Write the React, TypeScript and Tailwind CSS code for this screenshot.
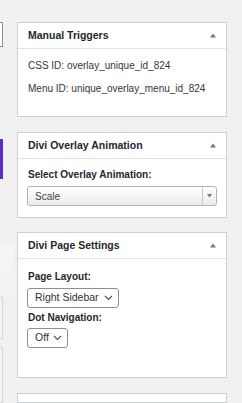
import React from "react";

const Tri = () => (
  <svg width="6" height="5" viewBox="0 0 6 5" className="block">
    <polygon points="3,0.5 6,4.5 0,4.5" fill="#72777c" />
  </svg>
);

const Chev = () => (
  <svg width="9" height="6" viewBox="0 0 9 6" className="block">
    <polyline points="1,1 4.5,4.5 8,1" fill="none" stroke="#50575e" strokeWidth="1.2" />
  </svg>
);

const Header = ({ title }: { title: string }) => (
  <div className="flex h-[26px] items-center justify-between border-b border-[#e2e4e7] pl-[10px] pr-[10px]">
    <span className="text-[10.5px] font-bold text-[#23282d]">{title}</span>
    <Tri />
  </div>
);

export default function App() {
  return (
    <div
      className="flex h-[403px] w-[242px] overflow-hidden bg-[#f1f1f1]"
      style={{ fontFamily: '"Liberation Sans", Arial, sans-serif' }}
    >
      <div className="flex w-[17px] shrink-0 flex-col">
        <div className="mt-[22px] h-[27px] w-[3px] border-y border-r border-[#8c8f94] bg-white" />
        <div className="mt-[92px] h-[43px] w-[3px] bg-[#5f2bc4]" />
        <div className="mt-[66px] h-[56px] w-[14px] bg-gradient-to-b from-[#f6f6f6] to-[#f1f1f1]" />
        <div className="h-[45px] w-[3px] border-y border-r border-[#d6d6d6] bg-[#f3f3f3]" />
        <div className="mt-[8px] h-[60px] w-[3px] border-y border-r border-[#d6d6d6] bg-[#f3f3f3]" />
      </div>
      <div className="flex w-[210px] shrink-0 flex-col">
        {/* Manual Triggers */}
        <div className="mt-[22px] border border-[#ccd0d4] bg-white">
          <Header title="Manual Triggers" />
          <div className="px-[10px] pb-[20px] pt-[10px] text-[10px] leading-[14px] text-[#32373c]">
            <p>CSS ID: overlay_unique_id_824</p>
            <p className="mt-[9px]">Menu ID: unique_overlay_menu_id_824</p>
          </div>
        </div>

        {/* Divi Overlay Animation */}
        <div className="mt-[15px] border border-[#ccd0d4] bg-white">
          <Header title="Divi Overlay Animation" />
          <div className="px-[9px] pb-[11px] pt-[9px]">
            <div className="pl-[1px] text-[10px] font-bold leading-[14px] text-[#23282d]">
              Select Overlay Animation:
            </div>
            <div className="mt-[4px] flex h-[20px] w-[190px] items-stretch rounded-[3px] border border-[#b4b4b4] bg-gradient-to-b from-white to-[#ebebeb]">
              <div className="flex flex-1 items-center pl-[7px] text-[10px] text-[#444]">Scale</div>
              <div className="flex w-[14px] items-center justify-center border-l border-[#c8c8c8]">
                <svg width="5" height="4" viewBox="0 0 5 4" className="block">
                  <polygon points="0,0 5,0 2.5,3.5" fill="#777" />
                </svg>
              </div>
            </div>
          </div>
        </div>

        {/* Divi Page Settings */}
        <div className="mt-[14px] border border-[#ccd0d4] bg-white">
          <Header title="Divi Page Settings" />
          <div className="px-[9px] pb-[29px] pt-[11px]">
            <div className="pl-[1px] text-[10px] font-bold leading-[14px] text-[#23282d]">Page Layout:</div>
            <div className="mt-[4px] flex h-[20px] w-[92px] items-center justify-between rounded-[3px] border border-[#8c8f94] bg-white pl-[7px] pr-[5px] text-[10.5px] text-[#2c3338]">
              <span>Right Sidebar</span>
              <Chev />
            </div>
            <div className="mt-[3px] pl-[1px] text-[10px] font-bold leading-[14px] text-[#23282d]">Dot Navigation:</div>
            <div className="mt-[3px] flex h-[20px] w-[41px] items-center justify-between rounded-[3px] border border-[#8c8f94] bg-white pl-[7px] pr-[5px] text-[10.5px] text-[#2c3338]">
              <span>Off</span>
              <Chev />
            </div>
          </div>
        </div>

        <div className="mt-[15px] h-[40px] border border-[#ccd0d4] bg-white" />
      </div>
    </div>
  );
}
